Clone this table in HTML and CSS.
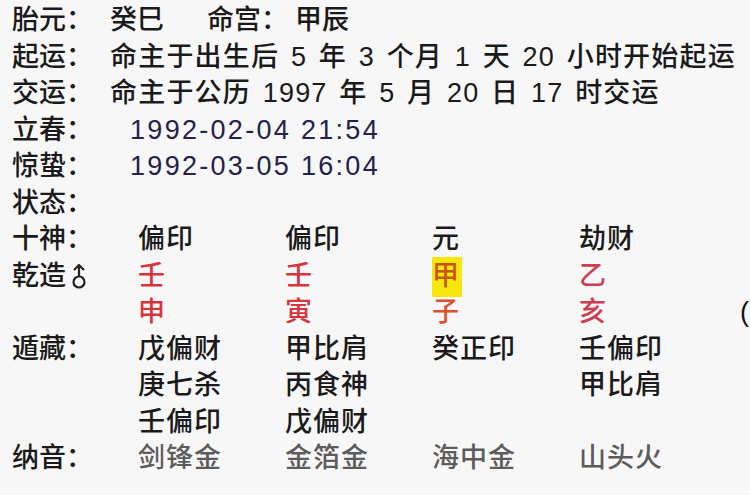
FILE: index.html
```html
<!DOCTYPE html>
<html lang="zh-CN">
<head>
<meta charset="utf-8">
<link rel="stylesheet" href="styles.css">
</head>
<body>
<div class="page">
  <div class="line"><span class="lab">胎元：</span><span class="v1">癸巳</span><span class="lab2">命宫：</span><span>甲辰</span></div>
  <div class="line"><span class="lab">起运：</span><span class="txt">命主于出生后 5 年 3 个月 1 天 20 小时开始起运</span></div>
  <div class="line"><span class="lab">交运：</span><span class="txt">命主于公历 1997 年 5 月 20 日 17 时交运</span></div>
  <div class="line"><span class="lab">立春：</span><span class="date">1992-02-04 21:54</span></div>
  <div class="line"><span class="lab">惊蛰：</span><span class="date">1992-03-05 16:04</span></div>
  <div class="line"><span class="lab">状态：</span></div>
  <div class="row"><span class="plab">十神：</span><span class="c">偏印</span><span class="c">偏印</span><span class="c">元</span><span class="c">劫财</span></div>
  <div class="row"><span class="plab">乾造<svg class="male" viewBox="0 0 18 28" width="18" height="28"><circle cx="9" cy="20" r="5.5" fill="none" stroke="#222" stroke-width="2.2"/><path d="M9 14.5V3M4 8l5-5 5 5" fill="none" stroke="#222" stroke-width="2.2" stroke-linejoin="round"/></svg></span><span class="c red">壬</span><span class="c red">壬</span><span class="c"><span class="hl">甲</span></span><span class="c pink">乙</span></div>
  <div class="row"><span class="plab"></span><span class="c red">申</span><span class="c red">寅</span><span class="c orange">子</span><span class="c pink">亥</span><span class="paren">(</span></div>
  <div class="row"><span class="plab">遁藏：</span><span class="c">戊偏财</span><span class="c">甲比肩</span><span class="c">癸正印</span><span class="c">壬偏印</span></div>
  <div class="row"><span class="plab"></span><span class="c">庚七杀</span><span class="c">丙食神</span><span class="c"></span><span class="c">甲比肩</span></div>
  <div class="row"><span class="plab"></span><span class="c">壬偏印</span><span class="c">戊偏财</span><span class="c"></span><span class="c"></span></div>
  <div class="row"><span class="plab">纳音：</span><span class="c gray">剑锋金</span><span class="c gray">金箔金</span><span class="c gray">海中金</span><span class="c gray">山头火</span></div>
</div>
</body>
</html>
```
FILE: styles.css
```css
html, body {
  margin: 0;
  padding: 0;
  background: #ffffff;
}
.page {
  width: 750px;
  height: 495px;
  box-sizing: border-box;
  padding: 2px 0 0 12px;
  background: #f7f7f7;
  font-family: "Liberation Sans", "Noto Sans CJK SC", sans-serif;
  font-size: 27px;
  font-weight: 500;
  color: #1a1a1a;
  overflow: hidden;
  position: relative;
}
.line, .row {
  display: flex;
  height: 36.5px;
  line-height: 36.5px;
  white-space: nowrap;
  align-items: center;
}
.lab {
  width: 98px;
  flex: none;
}
.v1 {
  width: 97px;
  flex: none;
}
.lab2 {
  width: 88px;
  flex: none;
}
.txt {
  letter-spacing: 1.2px;
  word-spacing: 3px;
}
.date {
  margin-left: 20px;
  color: #22224a;
  letter-spacing: 2.3px;
}
.plab {
  width: 126px;
  flex: none;
  display: flex;
  align-items: center;
}
.male {
  margin-left: 4px;
}
.c {
  width: 147px;
  flex: none;
  letter-spacing: 1px;
}
.red { color: #d8343c; }
.pink { color: #cc3e52; }
.orange { color: #e0502e; }
.gray { color: #5c5c5c; }
.hl {
  background: #f6e60c;
  color: #c8561a;
  padding: 4px 2px 6px 0;
}
.paren {
  margin-left: 14px;
  color: #111;
}
```
